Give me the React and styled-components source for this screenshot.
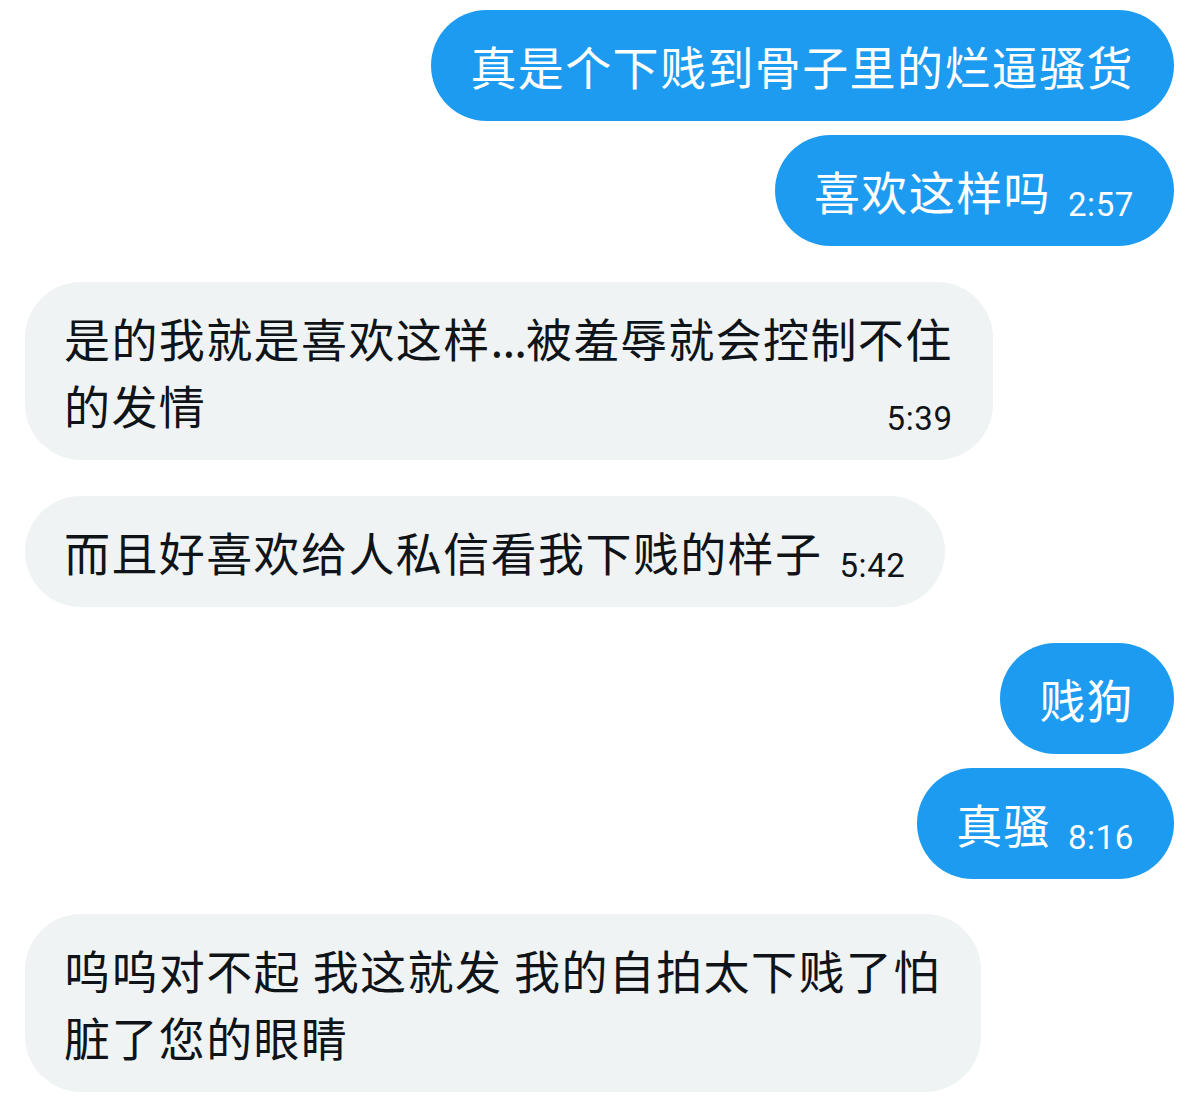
import React from "react";
import styled, { createGlobalStyle } from "styled-components";

const GlobalStyle = createGlobalStyle`
  html, body {
    margin: 0;
    padding: 0;
    background: #ffffff;
  }
  body {
    font-family: "Noto Sans CJK SC", "Noto Sans", sans-serif;
  }
`;

const Thread = styled.div`
  width: 1200px;
  box-sizing: border-box;
  padding: 10px 26px 11px 25px;
  display: flex;
  flex-direction: column;
`;

const Bubble = styled.div`
  align-self: ${(p) => (p.$out ? "flex-end" : "flex-start")};
  margin-top: ${(p) => p.$gap}px;
  background: ${(p) => (p.$out ? "#1D9BF0" : "#EFF3F4")};
  color: ${(p) => (p.$out ? "#ffffff" : "#0F1419")};
  border-radius: 56px;
  padding: 22px 40px 22px 39px;
  font-family: "Noto Sans CJK SC", sans-serif;
  font-size: 46px;
  line-height: 67px;
  letter-spacing: 1.4px;
  white-space: nowrap;
`;

const Dots = styled.span`
  letter-spacing: -1px;
`;

const Time = styled.span`
  float: right;
  margin: 31px 0 0 17px;
  font-family: Roboto, "Liberation Sans", sans-serif;
  font-size: 33px;
  line-height: 33px;
  letter-spacing: 0.6px;
`;

const messages = [
  { out: true, gap: 0, lines: ["真是个下贱到骨子里的烂逼骚货"] },
  { out: true, gap: 14, lines: ["喜欢这样吗"], time: "2:57" },
  {
    out: false,
    gap: 36,
    lines: ["是的我就是喜欢这样...被羞辱就会控制不住", "的发情"],
    time: "5:39",
  },
  { out: false, gap: 36, lines: ["而且好喜欢给人私信看我下贱的样子"], time: "5:42" },
  { out: true, gap: 36, lines: ["贱狗"] },
  { out: true, gap: 14, lines: ["真骚"], time: "8:16" },
  {
    out: false,
    gap: 35,
    lines: ["呜呜对不起 我这就发 我的自拍太下贱了怕", "脏了您的眼睛"],
  },
];

function Line({ text }) {
  const parts = text.split("...");
  return parts.map((p, k) => (
    <React.Fragment key={k}>
      {k > 0 && <Dots>...</Dots>}
      {p}
    </React.Fragment>
  ));
}

export default function App() {
  return (
    <>
      <GlobalStyle />
      <Thread>
        {messages.map((m, i) => (
          <Bubble key={i} $out={m.out} $gap={m.gap}>
            {m.lines.map((l, j) => (
              <React.Fragment key={j}>
                {j > 0 && <br />}
                <Line text={l} />
              </React.Fragment>
            ))}
            {m.time && <Time>{m.time}</Time>}
          </Bubble>
        ))}
      </Thread>
    </>
  );
}
